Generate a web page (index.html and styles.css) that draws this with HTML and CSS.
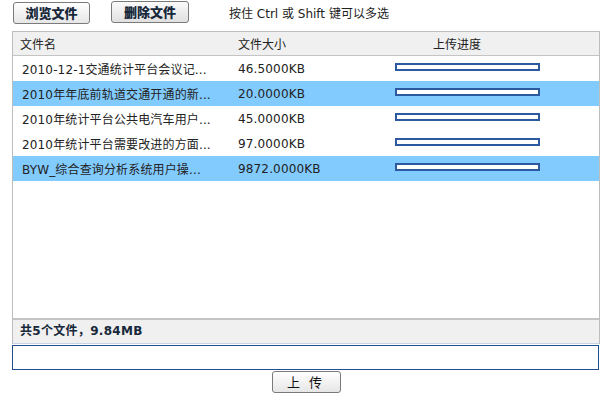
FILE: index.html
```html
<!DOCTYPE html>
<html lang="zh-CN">
<head>
<meta charset="utf-8">
<title>上传文件</title>
<link rel="stylesheet" href="styles.css">
</head>
<body>
<div class="toolbar">
  <button class="btn">浏览文件</button>
  <button class="btn btn-del">删除文件</button>
  <span class="hint">按住 Ctrl 或 Shift 键可以多选</span>
</div>
<div class="grid">
  <div class="head">
    <span class="c-name">文件名</span>
    <span class="c-size">文件大小</span>
    <span class="c-prog">上传进度</span>
  </div>
  <div class="list">
    <div class="row"><span class="c-name">2010-12-1交通统计平台会议记...</span><span class="c-size">46.5000KB</span><span class="c-prog"><span class="bar"></span></span></div>
    <div class="row sel"><span class="c-name">2010年年底前轨道交通开通的新...</span><span class="c-size">20.0000KB</span><span class="c-prog"><span class="bar"></span></span></div>
    <div class="row"><span class="c-name">2010年统计平台公共电汽车用户...</span><span class="c-size">45.0000KB</span><span class="c-prog"><span class="bar"></span></span></div>
    <div class="row"><span class="c-name">2010年统计平台需要改进的方面...</span><span class="c-size">97.0000KB</span><span class="c-prog"><span class="bar"></span></span></div>
    <div class="row sel"><span class="c-name">BYW_综合查询分析系统用户操...</span><span class="c-size">9872.0000KB</span><span class="c-prog"><span class="bar"></span></span></div>
  </div>
  <div class="summary">共5个文件，9.84MB</div>
</div>
<div class="status"></div>
<div class="actions">
  <button class="btn btn-up">上 传</button>
</div>
</body>
</html>
```

FILE: styles.css
```css
html, body {
  margin: 0;
  padding: 0;
  background: #fff;
}
body {
  font-family: "DejaVu Sans", "Noto Sans CJK SC", sans-serif;
  font-size: 12px;
  color: #222;
  width: 610px;
  height: 397px;
  overflow: hidden;
}
.toolbar {
  display: flex;
  align-items: center;
  height: 24px;
  padding-left: 13px;
}
.btn {
  height: 22px;
  padding: 0;
  border: 1px solid #7a7a7a;
  border-radius: 3px;
  background: linear-gradient(#ffffff, #e6e6e6);
  font-family: "Noto Sans CJK SC", sans-serif;
  font-size: 13px;
  font-weight: 900;
  color: #17283a;
  line-height: 20px;
}
.toolbar .btn {
  width: 77px;
  margin-top: 1px;
}
.toolbar .btn-del {
  width: 78px;
  margin-left: 21px;
  margin-top: -1px;
  background: linear-gradient(#fafafa, #e0e0e0);
}
.hint {
  margin-left: 40px;
  color: #222;
}
.grid {
  margin: 7px 0 0 12px;
  width: 586px;
  border: 1px solid #bdbdbd;
  border-bottom: none;
}
.head {
  display: flex;
  align-items: center;
  height: 23px;
  background: #f0f0f0;
  border-bottom: 1px solid #c4c4c4;
}
.head .c-name {
  padding-left: 7px;
  width: 218px;
}
.head .c-size {
  width: 195px;
}
.row .c-name,
.row .c-size {
  letter-spacing: 0.15px;
}
.list {
  height: 262px;
  border-bottom: 2px solid #c4c4c4;
}
.row {
  display: flex;
  align-items: center;
  height: 25px;
}
.row.sel {
  background: #82cbff;
}
.row .c-name {
  padding-left: 9px;
  width: 216px;
  white-space: nowrap;
}
.row .c-size {
  width: 157px;
}
.row .c-prog {
  display: flex;
  height: 25px;
  align-items: flex-start;
}
.bar {
  display: block;
  margin-top: 7px;
  width: 141px;
  height: 4px;
  border: 2px solid #2b5aa0;
  background: #fff;
}
.summary {
  height: 23px;
  line-height: 23px;
  padding-left: 7px;
  background: #f0f0f0;
  border-bottom: 1px solid #c6d4e4;
  font-weight: bold;
  color: #17283a;
  letter-spacing: 0.3px;
}
.status {
  margin: 1px 0 0 12px;
  width: 585px;
  height: 23px;
  border: 1px solid #1f4f8f;
}
.actions {
  display: flex;
  justify-content: center;
  padding-left: 2px;
  margin-top: 1px;
}
.btn-up {
  width: 69px;
  font-weight: normal;
  font-size: 13px;
  color: #111;
  letter-spacing: 3px;
}
```
